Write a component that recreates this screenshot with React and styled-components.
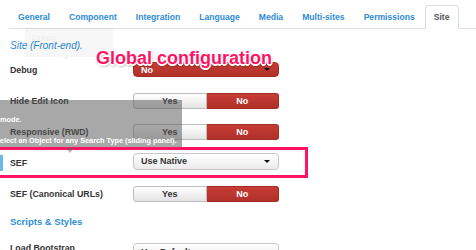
import React from 'react'
import styled, { createGlobalStyle } from 'styled-components'

const GlobalStyle = createGlobalStyle`
html, body {
  margin:0;
  padding:0;
  background:#ffffff;
}
body {
  font-family:"Liberation Sans", Arial, sans-serif;
  width:476px;
  height:250px;
  overflow:hidden;
}
`

const Page = styled.div`
position:relative;
width:476px;
height:250px;
overflow:hidden;
background:#fff;
`

const TabBar = styled.ul`
display:flex;
list-style:none;
margin:0 0 0 9px;
padding:5px 0 0 0;
border-bottom:1px solid #dddddd;
`

const Tab = styled.li`
height:24px;
box-sizing:border-box;
margin:0 1px -1px 0;
padding:0 8px;
line-height:22px;
font-size:8.6px;
font-weight:bold;
color:${(props) => (props.$active ? '#555555' : '#2f8bd5')};
background:${(props) => (props.$active ? '#ffffff' : 'transparent')};
border:1px solid ${(props) => (props.$active ? '#dddddd' : 'transparent')};
border-bottom:none;
border-radius:4px 4px 0 0;
`

const Content = styled.div`
padding-left:10px;
`

const SectionTitle = styled.div`
margin-top:11px;
margin-bottom:2px;
line-height:12px;
font-size:10px;
font-style:italic;
color:#2a8ad4;
`

const SubHeading = styled.div`
margin-top:7px;
line-height:12px;
font-size:9.5px;
font-weight:bold;
color:#2e8fd7;
`

const Row = styled.div`
display:flex;
align-items:${(props) => (props.$top ? 'flex-start' : 'center')};
height:31px;
margin-top:${(props) => props.$offset || 0}px;
`

const FocusRow = styled.div`
display:flex;
align-items:center;
box-sizing:border-box;
width:308px;
height:31px;
margin-left:-10px;
border:3px solid #ff1464;
border-left:none;
`

const Marker = styled.span`
width:3px;
height:16px;
margin:0 7px 0 0;
background:#6ab8e6;
`

const Label = styled.div`
width:123px;
font-size:8.8px;
font-weight:bold;
color:#333333;
`

const Toggle = styled.div`
display:flex;
width:146px;
height:16px;
`

const ToggleButton = styled.div`
flex:1;
display:flex;
align-items:center;
justify-content:center;
box-sizing:border-box;
font-size:9px;
font-weight:bold;
color:${(props) => (props.$on ? '#ffffff' : '#333333')};
background:${(props) =>
  props.$on
    ? 'linear-gradient(#c63d35, #b0302a)'
    : 'linear-gradient(#ffffff, #e4e4e4)'};
border:1px solid ${(props) => (props.$on ? '#a52d27' : '#bdbdbd')};
border-radius:${(props) => (props.$on ? '0 3px 3px 0' : '3px 0 0 3px')};
${(props) => (props.$on ? 'border-left:none;' : '')}
`

const Select = styled.div`
display:flex;
align-items:center;
justify-content:space-between;
box-sizing:border-box;
width:146px;
height:${(props) => (props.$danger ? 15 : 17)}px;
margin-top:${(props) => props.$shift || 0}px;
padding:0 8px 0 7px;
font-size:9px;
font-weight:bold;
color:${(props) => (props.$danger ? '#ffffff' : '#333333')};
background:${(props) =>
  props.$danger
    ? 'linear-gradient(#c63d35, #b0302a)'
    : 'linear-gradient(#ffffff, #ebebeb)'};
border:1px solid ${(props) => (props.$danger ? '#a52d27' : '#c6c6c6')};
border-radius:4px;
`

const Caret = styled.span`
width:0;
height:0;
border-left:3px solid transparent;
border-right:3px solid transparent;
border-top:3px solid #111111;
`

const Annotation = styled.div`
position:absolute;
left:96px;
top:48px;
font-size:18px;
font-weight:bold;
line-height:20px;
color:#ff1464;
text-shadow:
  -1px -1px 0 #fff, 1px -1px 0 #fff, -1px 1px 0 #fff, 1px 1px 0 #fff,
  0 -1.5px 0 #fff, 0 1.5px 0 #fff, -1.5px 0 0 #fff, 1.5px 0 0 #fff,
  1px 2px 3px rgba(0,0,0,0.45);
z-index:5;
`

const GhostTip = styled.div`
position:absolute;
left:25px;
top:28px;
width:88px;
height:29px;
background:rgba(0,0,0,0.03);
color:rgba(0,0,0,0.05);
font-size:8px;
font-weight:bold;
padding:5px 6px;
box-sizing:border-box;

&::after{
  content:'';
  position:absolute;
  left:38px;
  bottom:-3px;
  border-left:3px solid transparent;
  border-right:3px solid transparent;
  border-top:3px solid rgba(0,0,0,0.05);
}
`

const Tooltip = styled.div`
position:absolute;
left:0;
top:100px;
width:182px;
height:47px;
padding-top:15px;
box-sizing:border-box;
background:rgba(88,88,88,0.52);
z-index:3;

&::after{
  content:'';
  position:absolute;
  left:66px;
  bottom:-6px;
  border-left:4px solid transparent;
  border-right:4px solid transparent;
  border-top:5px solid rgba(88,88,88,0.45);
}
`

const TipLine = styled.div`
margin-left:${(props) => props.$indent || 0}px;
margin-top:${(props) => props.$gap || 0}px;
line-height:9px;
font-size:7.3px;
font-weight:bold;
color:#ffffff;
white-space:nowrap;
`

const YesNo = () => (
  <Toggle>
    <ToggleButton>Yes</ToggleButton>
    <ToggleButton $on>No</ToggleButton>
  </Toggle>
)

const tabs = ['General', 'Component', 'Integration', 'Language', 'Media', 'Multi-sites', 'Permissions', 'Site']

const App = () => {
  return (
    <Page>
      <GlobalStyle />
      <TabBar>
        {tabs.map((t) => (
          <Tab key={t} $active={t === 'Site'}>{t}</Tab>
        ))}
      </TabBar>
      <Content>
        <SectionTitle>Site (Front-end).</SectionTitle>
        <Row>
          <Label>Debug</Label>
          <Select $danger>
            <span>No</span>
            <Caret />
          </Select>
        </Row>
        <Row>
          <Label>Hide Edit Icon</Label>
          <YesNo />
        </Row>
        <Row>
          <Label>Responsive (RWD)</Label>
          <YesNo />
        </Row>
        <FocusRow>
          <Marker />
          <Label>SEF</Label>
          <Select $shift={-3}>
            <span>Use Native</span>
            <Caret />
          </Select>
        </FocusRow>
        <Row>
          <Label>SEF (Canonical URLs)</Label>
          <YesNo />
        </Row>
        <SubHeading>Scripts &amp; Styles</SubHeading>
        <Row $top $offset={15}>
          <Label>Load Bootstrap</Label>
          <Select>
            <span>Use Default</span>
            <Caret />
          </Select>
        </Row>
      </Content>
      <GhostTip>Debug</GhostTip>
      <Tooltip>
        <TipLine>mode.</TipLine>
        <TipLine $indent={-5} $gap={12}>Select an Object for any Search Type (sliding panel).</TipLine>
      </Tooltip>
      <Annotation>Global configuration</Annotation>
    </Page>
  )
}

export default App
